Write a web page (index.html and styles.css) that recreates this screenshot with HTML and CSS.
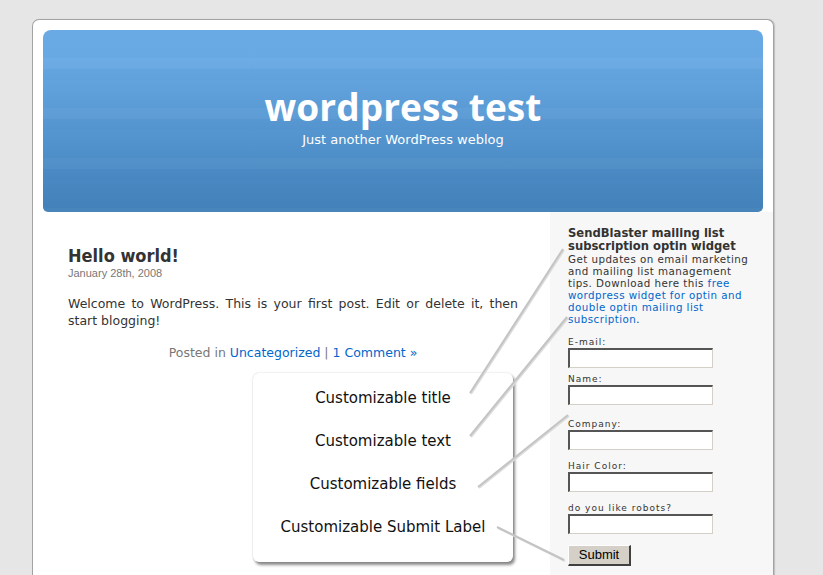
FILE: index.html
```html
<!DOCTYPE html>
<html>
<head>
<meta charset="utf-8">
<title>wordpress test</title>
<link rel="stylesheet" href="styles.css">
</head>
<body>
<div class="page">
  <header class="header">
    <h1 class="site-title">wordpress test</h1>
    <p class="site-desc">Just another WordPress weblog</p>
  </header>
  <div class="columns">
    <main class="content">
      <article class="post">
        <h2 class="post-title">Hello world!</h2>
        <div class="post-date">January 28th, 2008</div>
        <p class="post-body">Welcome to WordPress. This is your first post. Edit or delete it, then start blogging!</p>
        <p class="post-meta">Posted in <a href="#">Uncategorized</a> | <a href="#">1 Comment »</a></p>
      </article>
    </main>
    <aside class="sidebar">
      <h3 class="widget-title">SendBlaster mailing list subscription optin widget</h3>
      <p class="widget-text">Get updates on email marketing and mailing list management tips. Download here this <a href="#">free</a> <a href="#">wordpress widget for optin and</a> <a href="#">double optin mailing list</a> <a href="#">subscription</a>.</p>
      <form class="widget-form">
        <div class="field field--tight"><label>E-mail:</label><input type="text"></div>
        <div class="field field--loose"><label>Name:</label><input type="text"></div>
        <div class="field"><label>Company:</label><input type="text"></div>
        <div class="field"><label>Hair Color:</label><input type="text"></div>
        <div class="field"><label>do you like robots?</label><input type="text"></div>
        <button type="button" class="submit">Submit</button>
      </form>
    </aside>
  </div>

  <div class="callout">
    <p>Customizable title</p>
    <p>Customizable text</p>
    <p>Customizable fields</p>
    <p>Customizable Submit Label</p>
  </div>

  <svg class="connectors" width="740" height="555" viewBox="0 0 740 555">
    <g class="line-shadow">
      <line x1="438" y1="374" x2="531" y2="230"/>
      <line x1="438" y1="417" x2="535" y2="298"/>
      <line x1="446" y1="468" x2="536" y2="396"/>
      <polyline points="465,508 524,537 532,541"/>
    </g>
    <g class="line-main">
      <line x1="437" y1="373" x2="530" y2="229"/>
      <line x1="437" y1="416" x2="534" y2="297"/>
      <line x1="445" y1="467" x2="535" y2="395"/>
      <polyline points="464,507 523,536 531,540"/>
    </g>
  </svg>
</div>
</body>
</html>
```

FILE: styles.css
```css
html, body {
  margin: 0;
  padding: 0;
}
body {
  height: 575px;
  background: #e6e6e6;
  font-family: "DejaVu Sans", Verdana, sans-serif;
  color: #333;
  overflow: hidden;
}
a {
  color: #0066cc;
  text-decoration: none;
}
.page {
  position: relative;
  width: 740px;
  margin: 19px 0 0 32px;
  padding-top: 10px;
  background: #fff;
  border: 1px solid #a3a3a3;
  border-bottom: 0;
  border-radius: 7px 7px 0 0;
  box-shadow: 1px 0 1px rgba(0,0,0,0.18);
}
.header {
  margin: 0 10px;
  height: 182px;
  box-sizing: border-box;
  padding-top: 57px;
  border-radius: 8px 8px 5px 5px;
  text-align: center;
  color: #fff;
  background:
    repeating-linear-gradient(to bottom, rgba(255,255,255,0) 0 28px, rgba(255,255,255,0.03) 28px 39px, rgba(0,0,0,0.012) 39px 50px),
    linear-gradient(to bottom, #69aae5 0, #68a9e4 28px, #5a9bd6 80px, #4b8bc5 140px, #4180b8 182px);
}
.site-title {
  margin: 0;
  font-family: "Open Sans", sans-serif;
  font-weight: 700;
  font-size: 37px;
  line-height: 40px;
  letter-spacing: 0.1px;
}
.site-desc {
  margin: 6px 0 0;
  font-size: 13px;
  line-height: 14px;
}
.columns {
  display: flex;
}
.content {
  width: 507px;
  margin-left: 10px;
  box-sizing: border-box;
  padding: 33px 32px 0 25px;
}
.post-title {
  margin: 0;
  font-family: "DejaVu Sans Condensed", "DejaVu Sans", sans-serif;
  font-stretch: condensed;
  font-weight: 700;
  font-size: 18px;
  line-height: 22px;
  color: #333;
}
.post-date {
  font-family: "Liberation Sans", Arial, sans-serif;
  font-size: 11px;
  line-height: 13px;
  color: #777;
}
.post-body {
  margin: 15px 0 0;
  font-size: 12.5px;
  line-height: 17px;
  text-align: justify;
}
.post-meta {
  margin: 15px 0 0;
  font-size: 12.5px;
  line-height: 17px;
  text-align: center;
  color: #777;
}
.sidebar {
  flex: 1;
  background: #f7f7f7;
  padding: 15px 20px 10px 18px;
}
.widget-title {
  margin: 0;
  font-size: 11.6px;
  line-height: 13px;
  font-weight: 700;
  color: #333;
}
.widget-text {
  margin: 0;
  font-size: 10.3px;
  line-height: 12px;
  letter-spacing: 0.45px;
  color: #333;
}
.widget-form {
  margin-top: 11px;
}
.field {
  display: flex;
  flex-direction: column;
  align-items: flex-start;
  margin-bottom: 10px;
}
.field--tight {
  margin-bottom: 5px;
}
.field--loose {
  margin-bottom: 13px;
}
.field label {
  font-size: 9px;
  line-height: 12px;
  letter-spacing: 1px;
  color: #333;
}
.field input {
  width: 145px;
  height: 20px;
  box-sizing: border-box;
  margin: 0;
  padding: 0 2px;
  background: #fff;
  border-style: solid;
  border-width: 2px 1px 1px 2px;
  border-color: #555 #d4d0c8 #d4d0c8 #555;
}
.submit {
  width: 63px;
  height: 21px;
  margin: 0;
  padding: 0;
  background: #d4d0c8;
  border-style: solid;
  border-width: 1px 2px 2px 1px;
  border-color: #fff #404040 #404040 #fff;
  font-family: "Liberation Sans", Arial, sans-serif;
  font-size: 13px;
  color: #000;
}
.connectors {
  position: absolute;
  left: 0;
  top: 0;
  pointer-events: none;
}
.line-shadow line, .line-shadow polyline {
  stroke: #dcdcdc;
  stroke-width: 2;
  fill: none;
}
.line-main line, .line-main polyline {
  stroke: #c4c4c4;
  stroke-width: 2;
  fill: none;
}
.callout {
  position: absolute;
  left: 220px;
  top: 353px;
  width: 260px;
  height: 189px;
  box-sizing: border-box;
  padding-top: 4px;
  background: #fff;
  border-radius: 6px;
  box-shadow: 2px 3px 3px rgba(0,0,0,0.45), 0 0 2px rgba(0,0,0,0.2);
  text-align: center;
}
.callout p {
  margin: 0;
  font-size: 15px;
  line-height: 43px;
  color: #111;
}
```
